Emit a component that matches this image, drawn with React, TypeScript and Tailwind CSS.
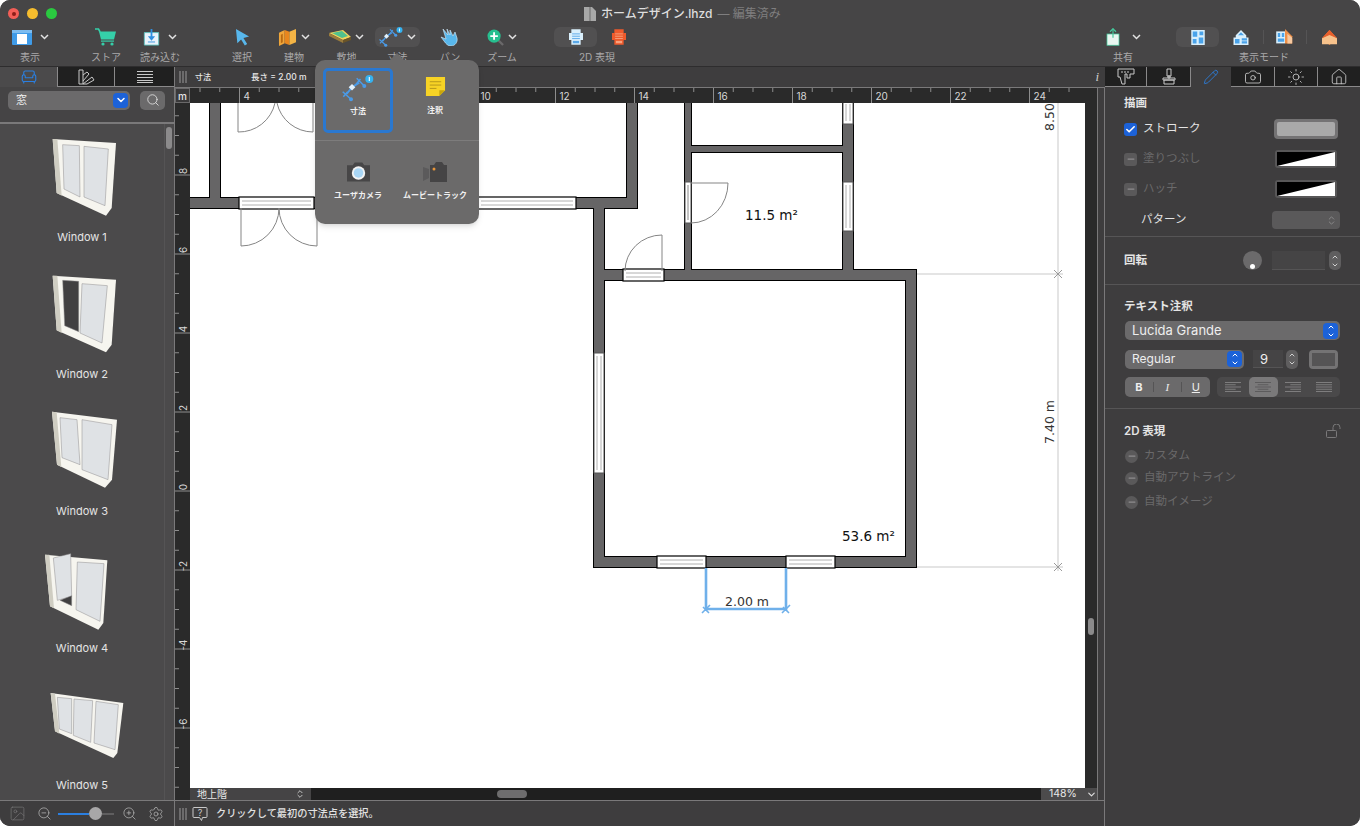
import { Armchair, Camera, Check, ChevronDown, ChevronUp, ChevronsUpDown, House, Image, Minus, Pencil, Search, Settings, Sun, ZoomIn, ZoomOut } from "lucide-react";
import type { ReactNode } from "react";

const Chev = () => (
    <svg width="9" height="6" viewBox="0 0 9 6" className="shrink-0">
        <path d="M1 1l3.5 3.5L8 1" fill="none" stroke="#e2e2e2" strokeWidth="1.5" />
    </svg>
);

const Grip = () => (
    <svg width="8" height="12" viewBox="0 0 8 12" className="shrink-0">
        <path d="M1 0v12M4 0v12M7 0v12" stroke="#9a9a9a" strokeWidth="1" />
    </svg>
);

const SidebarIcon = () => (
    <svg width="20" height="15" viewBox="0 0 20 15">
        <rect width="20" height="15" rx="1" fill="#3f9be8" />
        <rect x="5" y="4" width="10" height="10" fill="#fff" />
        <rect x="0" y="0" width="20" height="3" fill="#7cbcf0" />
    </svg>
);

const CartIcon = () => (
    <svg width="22" height="18" viewBox="0 0 22 18">
        <path d="M0 1h3.5l1.6 3" fill="none" stroke="#35cfa9" strokeWidth="1.6" />
        <path d="M4 3.5h17l-2 8H6z" fill="#35cfa9" />
        <rect x="6" y="12.5" width="13" height="1.2" fill="#35cfa9" />
        <circle cx="8" cy="16" r="1.6" fill="#35cfa9" />
        <circle cx="17" cy="16" r="1.6" fill="#35cfa9" />
    </svg>
);

const ImportIcon = () => (
    <svg width="17" height="17" viewBox="0 0 18 19">
        <path d="M1 4h16v14H1z" fill="#eaf3fb" stroke="#5fc3c0" strokeWidth="1" />
        <path d="M9 0v10" stroke="#2f8fe0" strokeWidth="2" />
        <path d="M5 8h8l-4 5z" fill="#2f8fe0" />
        <path d="M5 14.5h8" stroke="#2f8fe0" strokeWidth="1" />
    </svg>
);

const CursorIcon = () => (
    <svg width="15" height="17" viewBox="0 0 16 18">
        <path d="M1 0l14 8-6 1.5L13 16l-2.5 1.5L6.5 11 2.5 15z" fill="#58b7ec" />
    </svg>
);

const BuildIcon = () => (
    <svg width="19" height="18" viewBox="0 0 20 19">
        <path d="M1 5l6-3v14l-6 3z" fill="#f0a63a" />
        <path d="M7 2l5 2v14l-5-2z" fill="#e8861d" />
        <path d="M12 4l7-3v14l-7 3z" fill="#f4b445" />
        <path d="M3 7l2-1v9l-2 1z" fill="#b96a12" />
    </svg>
);

const LandIcon = () => (
    <svg width="22" height="14" viewBox="0 0 22 14">
        <path d="M0 3l14-3 8 7-8 3z" fill="#f1d35b" />
        <path d="M3 3l10-2 6 5-6 2z" fill="#4fc18e" />
        <path d="M0 3l14 7v3L0 6z" fill="#9a7b3c" />
        <path d="M14 10l8-3v3l-8 3z" fill="#6a5428" />
    </svg>
);

const DimIcon = ({ width = 32 }: { width?: number }) => (
    <svg width={width} height={(width * 27) / 32} viewBox="0 0 32 27" className="shrink-0">
        <path d="M.7 16.7L9 24.3M1.3 21.7l4.4-5M14.7 3.3L22.3 11M12.5 11l6-7" fill="none" stroke="#4a9be8" strokeWidth="1.5" />
        <path d="M4.7 19L10 12.3l7.3-4.6" fill="none" stroke="#4a9be8" strokeWidth="1.8" />
        <circle cx="9" cy="24.3" r="2" fill="#4a9be8" />
        <circle cx="22.3" cy="11" r="2" fill="#4a9be8" />
        <path d="M10 9l3.3 3.3-3.3 3.3-3.3-3.3z" fill="#e2f1fc" />
        <circle cx="27.3" cy="4" r="4" fill="#35b2f0" />
        <path d="M27.3 2v4" stroke="#fff" strokeWidth="1.1" />
    </svg>
);

const HandIcon = () => (
    <svg width="20" height="18" viewBox="0 0 20 18">
        <path d="M3 1l5 6-1-6 3 6 0-5 3 6 2-4 2 6c1 4-2 8-6 8-3 0-5-2-7-5L1 9l5 2z" fill="#58b7ec" stroke="#d8effb" strokeWidth=".6" />
    </svg>
);

const ZoomGreen = () => (
    <svg width="17" height="17" viewBox="0 0 18 18">
        <path d="M11 11l6 6" stroke="#6a696a" strokeWidth="2.4" />
        <circle cx="7.5" cy="7.5" r="7" fill="#27bf8f" />
        <path d="M7.5 3.5v8M3.5 7.5h8" stroke="#fff" strokeWidth="2" />
    </svg>
);

const Plan2D = ({ c, d }: { c: string; d: string }) => (
    <svg width="14" height="16" viewBox="0 0 18 20">
        <path d="M3 0h12v5h3v9h-3v6H3v-6H0V5h3z" fill={c} />
        <path d="M4 6h10M4 9h10M4 12h10" stroke={d} strokeWidth="1.2" />
        <rect x="5" y="15" width="8" height="3" fill={d} />
    </svg>
);

const ShareIcon = () => (
    <svg width="14" height="18" viewBox="0 0 18 24">
        <rect x="1" y="8" width="16" height="15" fill="#e9f7f1" stroke="#45c99c" strokeWidth="1" />
        <path d="M9 1v12" stroke="#45c99c" strokeWidth="1.6" />
        <path d="M5 5l4-4 4 4" fill="none" stroke="#45c99c" strokeWidth="1.6" />
    </svg>
);

const FloorIcon = () => (
    <svg width="14" height="15" viewBox="0 0 18 20">
        <rect width="18" height="20" fill="#d9effc" />
        <path d="M2 2h6v7H2zM11 2h5v5h-5zM2 12h5v6H2zM10 10h6v8h-6z" fill="#4aa3ea" />
    </svg>
);

const HouseIcon = () => (
    <svg width="16" height="15" viewBox="0 0 20 20">
        <path d="M10 0l7 7v3h3v10H0V10h3V7z" fill="#d9effc" />
        <path d="M10 3l4 4H6zM2 12h6v6H2zM11 11h7v3h-7zM11 15h7v3h-7z" fill="#4aa3ea" />
    </svg>
);

const MixedIcon = () => (
    <svg width="18" height="16" viewBox="0 0 22 20">
        <rect y="3" width="11" height="15" fill="#d9effc" />
        <path d="M2 5h3v5H2zM7 5h3v5H7zM2 12h8v4H2z" fill="#4aa3ea" />
        <path d="M11 0l9 9v9H11z" fill="#ee8f47" />
        <path d="M14 6l6 5v7h-6z" fill="#f7c9a0" />
    </svg>
);

const RoofIcon = () => (
    <svg width="17" height="15" viewBox="0 0 20 18">
        <path d="M10 0l9 10-9 8-9-8z" fill="#ee7f3a" />
        <path d="M1 10l9-5 9 5v7H1z" fill="#f7c28c" />
        <path d="M10 0l9 10-9-4-9 4z" fill="#e85f2c" />
    </svg>
);

const NoteIcon = () => (
    <svg width="21" height="21" viewBox="0 0 22 22">
        <path d="M1 1h20v14l-6 6H1z" fill="#f7d325" />
        <path d="M15 21v-6h6z" fill="#c9a50c" />
        <path d="M5 6h12M5 9.5h12M5 13h7" stroke="#b5961a" strokeWidth="1" />
    </svg>
);

const CamIcon = () => (
    <svg width="23" height="20" viewBox="0 0 24 20">
        <path d="M8 0h8l2 3h6v17H0V3h6z" fill="#474647" />
        <circle cx="12" cy="11" r="7" fill="#f2f2f2" />
        <circle cx="12" cy="11" r="5" fill="#a9d6f5" />
    </svg>
);

const MovieIcon = () => (
    <svg width="24" height="20" viewBox="0 0 24 20">
        <path d="M0 5l6 2v9l-6 3z" fill="#5b5a5b" />
        <path d="M7 3h4l2-3h6l2 3h3v17H7z" fill="#454445" />
        <circle cx="11" cy="7" r="1.5" fill="#e8963a" />
    </svg>
);

const ToolItem = ({ w, ml, label, active, children }: { w: string; ml?: string; label: string; active?: boolean; children: ReactNode }) => (
    <div className={`flex flex-col items-center ${w} ${ml ?? ""}`}>
        <div className={`flex h-5 items-center justify-center gap-1 rounded-md px-1 ${active ? "bg-[#515051]" : ""}`}>{children}</div>
        <span className="mt-[3px] text-[10px] leading-[14px] whitespace-nowrap text-[#aaa9aa]">{label}</span>
    </div>
);

const Toolbar = () => (
    <header className="h-[67px] shrink-0 border-b border-[#2e2d2e] bg-[#464546]">
        <div className="flex h-[27px] items-center pl-2">
            <span className="relative size-[11px] rounded-full bg-[#f25e57]">
                <span className="absolute top-[3.5px] left-[3.5px] size-1 rounded-full bg-[#8c1d18]" />
            </span>
            <span className="ml-2 size-[11px] rounded-full bg-[#f6bd2e]" />
            <span className="ml-2 size-[11px] rounded-full bg-[#2ac940]" />
            <svg width="12" height="14" viewBox="0 0 12 14" className="ml-[527px]">
                <path d="M0 0h8l4 4v10H0z" fill="#a8a8a8" />
                <path d="M6 0v14" stroke="#6a6a6a" strokeWidth="1" />
            </svg>
            <span className="ml-[5px] text-[12px] leading-4 font-medium whitespace-nowrap text-[#dedede]">ホームデザイン.lhzd</span>
            <span className="ml-[5px] text-[12px] leading-4 whitespace-nowrap text-[#7f7e7f]">— 編集済み</span>
        </div>
        <div className="flex">
            <div className="flex pl-[6px]">
                <ToolItem w="w-[48px]" label="表示"><SidebarIcon /><span className="ml-1"><Chev /></span></ToolItem>
                <ToolItem w="w-[48px]" ml="ml-[28px]" label="ストア"><CartIcon /></ToolItem>
                <ToolItem w="w-[60px]" label="読み込む"><ImportIcon /><span className="ml-1"><Chev /></span></ToolItem>
                <ToolItem w="w-[50px]" ml="ml-[27px]" label="選択"><CursorIcon /></ToolItem>
                <ToolItem w="w-[54px]" label="建物"><BuildIcon /><Chev /></ToolItem>
                <ToolItem w="w-[51px]" label="敷地"><LandIcon /><Chev /></ToolItem>
                <ToolItem w="w-[51px]" label="寸法" active><DimIcon width={24} /><Chev /></ToolItem>
                <ToolItem w="w-[54px]" label="パン"><HandIcon /></ToolItem>
                <ToolItem w="w-[50px]" label="ズーム"><ZoomGreen /><Chev /></ToolItem>
                <div className="ml-[27px] flex w-[86px] flex-col items-center">
                    <div className="flex h-5">
                        <span className="flex w-[43px] items-center justify-center rounded-md bg-[#515051]"><Plan2D c="#d9effc" d="#5aa9ea" /></span>
                        <span className="flex w-[43px] items-center justify-center"><Plan2D c="#ee5a2c" d="#f7a27e" /></span>
                    </div>
                    <span className="mt-[3px] text-[10px] leading-[14px] text-[#aaa9aa]">2D 表現</span>
                </div>
            </div>
            <div className="ml-auto flex pr-2">
                <ToolItem w="w-[50px]" label="共有"><ShareIcon /><span className="ml-2"><Chev /></span></ToolItem>
                <div className="ml-[28px] flex w-[176px] flex-col items-center">
                    <div className="flex h-5 w-full">
                        <span className="flex w-[43px] items-center justify-center rounded-md bg-[#515051]"><FloorIcon /></span>
                        <span className="flex w-[44px] items-center justify-center"><HouseIcon /></span>
                        <span className="my-[3px] flex w-[44px] items-center justify-center border-x border-[#555455]"><MixedIcon /></span>
                        <span className="flex w-[44px] items-center justify-center"><RoofIcon /></span>
                    </div>
                    <span className="mt-[3px] text-[10px] leading-[14px] text-[#aaa9aa]">表示モード</span>
                </div>
            </div>
        </div>
    </header>
);

const WindowArt = ({ index }: { index: number }) => {
    const frame = "#f6f5ef";
    const side = "#cfcdc2";
    const glass = "#dfe2e5";
    const shapes = [
        { dy: 0, outer: "158,148 348,160 335,355 318,378 170,310", side: "158,148 172,148 185,318 170,310", panes: ["188,165 238,168 240,322 192,298", "252,170 325,178 315,348 252,322"], dark: [] as string[] },
        { dy: -411, outer: "158,558 348,570 335,765 318,788 170,722", side: "158,558 172,558 185,730 170,722", panes: ["246,582 322,588 306,760 240,730"], dark: ["188,572 236,575 236,726 194,708"] },
        { dy: 0, outer: "156,144 351,168 336,348 315,372 171,303", side: "156,144 170,146 184,310 171,303", panes: ["180,162 231,168 240,303 186,282", "246,168 336,183 324,348 246,318"], dark: [] },
        { dy: 87, outer: "135,75 322,92 310,280 295,300 150,230", side: "135,75 148,75 162,236 150,230", panes: ["160,85 212,72 215,200 172,212", "232,97 312,102 300,275 228,240"], dark: ["180,212 215,198 215,228"] },
        { dy: -324, outer: "152,490 370,520 352,670 340,685 165,605", side: "152,490 165,492 178,612 165,605", panes: ["172,503 215,507 215,612 178,598", "222,508 278,513 272,638 220,617", "288,515 355,525 345,660 282,640"], dark: [] },
    ][index];
    return (
        <svg width="165" height="87" viewBox="0 130 495 261" className="shrink-0">
            <g transform={`translate(0 ${shapes.dy})`}>
                <polygon points={shapes.outer} fill={frame} />
                <polygon points={shapes.side} fill={side} />
                {shapes.panes.map((p) => <polygon key={p} points={p} fill={glass} stroke="#8f8d8f" strokeWidth="1.5" />)}
                {shapes.dark.map((p) => <polygon key={p} points={p} fill="#414041" stroke="#8f8d8f" strokeWidth="1.5" />)}
            </g>
        </svg>
    );
};

const LeftPanel = () => (
    <aside className="flex w-[175px] shrink-0 flex-col border-r border-[#7a797a] bg-[#4b4a4b]">
        <div className="flex h-5 shrink-0">
            <span className="flex w-[57px] items-center justify-center"><Armchair size={18} strokeWidth={1.5} className="text-[#2b7fe0]" /></span>
            <span className="flex w-[58px] items-center justify-center border-x border-b border-[#8a898a] bg-[#202020]">
                <svg width="17" height="16" viewBox="0 0 17 16" fill="none" stroke="#c8c8c8" strokeWidth="1">
                    <path d="M1 15V1h4v14zM5 6l4-3 2 2-6 7M5 15l9-7 2 3-7 4z" />
                </svg>
            </span>
            <span className="flex flex-1 items-center justify-center border-b border-[#8a898a] bg-[#202020]">
                <svg width="16" height="12" viewBox="0 0 16 12"><path d="M0 .5h16M0 3.5h16M0 6.5h16M0 9.5h16M0 11.5h16" stroke="#c8c8c8" strokeWidth="1" /></svg>
            </span>
        </div>
        <div className="flex h-[37px] shrink-0 items-center gap-[10px] border-b-2 border-[#7a797a] bg-[#454445] pb-[9px] pl-2">
            <div className="flex h-[19px] w-[122px] items-center rounded-[5px] bg-[#6b6a6b] pr-[2px] pl-2">
                <span className="text-[11px] text-[#eee]">窓</span>
                <span className="ml-auto flex h-[15px] w-[15px] items-center justify-center rounded-[4px] bg-[#1c62d8]"><ChevronDown size={12} strokeWidth={3} className="text-white" /></span>
            </div>
            <span className="flex h-[19px] w-[25px] items-center justify-center rounded-[5px] bg-[#6b6a6b]"><Search size={14} strokeWidth={1.4} className="text-[#e6e6e6]" /></span>
        </div>
        <div className="flex min-h-0 flex-1">
            <div className="flex flex-1 flex-col items-center overflow-hidden pt-[9px]">
                {["Window 1", "Window 2", "Window 3", "Window 4", "Window 5"].map((name, i) => (
                    <div key={name} className="flex h-[137px] w-[165px] shrink-0 flex-col items-center">
                        <WindowArt index={i} />
                        <span className="mt-[9px] text-[11px] leading-4 text-[#e4e4e4]">{name}</span>
                    </div>
                ))}
            </div>
            <div className="w-[10px] shrink-0 border-l border-[#555455] pt-[3px] pl-[1px]">
                <div className="h-[22px] w-[6px] rounded-full bg-[#8b8a8b]" />
            </div>
        </div>
        <div className="flex h-[26px] shrink-0 items-center border-t border-[#7a797a] bg-[#3e3d3e] pl-[9px]">
            <Image size={17} strokeWidth={1} className="text-[#777677]" />
            <ZoomOut size={15} strokeWidth={1.2} className="ml-[11px] text-[#b5b5b5]" />
            <div className="ml-[6px] flex w-[56px] items-center">
                <span className="h-[2px] w-[31px] bg-[#2b7fe0]" />
                <span className="size-[13px] shrink-0 rounded-full bg-[#a8a7a8]" />
                <span className="h-[2px] flex-1 bg-[#5f5e5f]" />
            </div>
            <ZoomIn size={15} strokeWidth={1.2} className="ml-[8px] text-[#b5b5b5]" />
            <Settings size={16} strokeWidth={1.1} className="ml-[11px] text-[#b5b5b5]" />
        </div>
    </aside>
);

const TopRuler = () => (
    <svg width="895" height="15" viewBox="190 87 895 15" className="block bg-[#2a2a2a]">
        {Array.from({ length: 46 }, (_, i) => {
            const x = 200 + i * 19.75;
            const major = i % 4 === 2;
            return <path key={i} d={`M${x} 87v${major ? 15 : 4}`} stroke="#8d8d8d" strokeWidth="1" />;
        })}
        {[4, 6, 8, 10, 12, 14, 16, 18, 20, 22, 24].map((n) => (
            <text key={n} x={243.5 + ((n - 4) / 2) * 79} y="99" fontSize="10" fill="#d8d8d8" fontFamily="Inter">{n}</text>
        ))}
    </svg>
);

const SideRuler = () => (
    <svg width="15" height="698" viewBox="175 102 15 698" className="block bg-[#2a2a2a]">
        {Array.from({ length: 36 }, (_, i) => {
            const y = 114.75 + i * 19.75;
            const major = i % 4 === 3;
            return <path key={i} d={`M175 ${y}h${major ? 15 : 4}`} stroke="#8d8d8d" strokeWidth="1" />;
        })}
        {["8", "6", "4", "2", "0", "-2", "-4", "-6"].map((n, i) => (
            <text key={n} x="187" y={170 + i * 79} fontSize="10" fill="#d8d8d8" fontFamily="Inter" textAnchor="middle" transform={`rotate(-90 187 ${170 + i * 79})`}>{n}</text>
        ))}
    </svg>
);

const walls = [
    [210, 100, 10, 107],
    [190, 197, 50, 10],
    [314, 197, 170, 10],
    [576, 197, 61, 10],
    [627, 100, 10, 107],
    [594, 197, 10, 369],
    [685, 100, 6, 172],
    [685, 145, 168, 6],
    [843, 100, 10, 179],
    [594, 269, 322, 10],
    [906, 269, 10, 297],
    [594, 556, 322, 10],
];

const hOpenings = [
    [239, 197, 75, 10],
    [478, 197, 98, 10],
    [623, 269, 41, 10],
    [657, 556, 49, 10],
    [786, 556, 49, 10],
];

const vOpenings = [
    [843, 100, 10, 23],
    [843, 181, 10, 49],
    [685, 181, 6, 41],
    [594, 352, 10, 120],
];

const FloorPlan = () => (
    <svg width="895" height="685" viewBox="190 102 895 685" className="block bg-white">
        {walls.map(([x, y, w, h]) => <rect key={`${x}-${y}-b`} x={x - 1} y={y - 1} width={w + 2} height={h + 2} fill="#000" />)}
        {walls.map(([x, y, w, h]) => <rect key={`${x}-${y}-g`} x={x} y={y} width={w} height={h} fill="#666566" />)}
        {hOpenings.map(([x, y, w, h]) => (
            <g key={`${x}-${y}`}>
                <rect x={x} y={y - 1} width={w} height={h + 2} fill="#fff" stroke="#000" strokeWidth="1.2" />
                <path d={`M${x + 3} ${y + 3}h${w - 6}M${x + 3} ${y + 7}h${w - 6}`} stroke="#b0b0b0" strokeWidth="1" />
            </g>
        ))}
        {vOpenings.map(([x, y, w, h]) => (
            <g key={`${x}-${y}`}>
                <rect x={x} y={y} width={w} height={h} fill="#fff" stroke="#555" strokeWidth="1" />
                <path d={`M${x + 3} ${y + 3}v${h - 6}M${x + w - 3} ${y + 3}v${h - 6}`} stroke="#b0b0b0" strokeWidth="1" />
            </g>
        ))}
        <g fill="none" stroke="#858585" strokeWidth="1">
            <path d="M238 102v29a37 37 0 0 0 37-29M277 102a37 37 0 0 0 36 29v-29" />
            <path d="M241 207v38a38 38 0 0 0 38-38M279 207a38 38 0 0 0 38 38v-38" />
            <path d="M691 182h37a37 40 0 0 1-37 40" />
            <path d="M662 270v-36a37 36 0 0 0-37 36" />
        </g>
        <g fill="none" stroke="#c9c9c9" strokeWidth="1">
            <path d="M917 273h146M917 566h146M1058 102v468" />
            <path d="M1054 269l8 8M1054 277l8-8M1054 562l8 8M1054 570l8-8" stroke="#9a9a9a" />
        </g>
        <g fill="none" stroke="#6fb0ea" strokeWidth="2.6">
            <path d="M706 567v43M786 567v43M706 608h80" />
            <path d="M702 612l8-8M782 612l8-8M703 606l6 6M783 606l6 6" strokeWidth="1.6" />
        </g>
        <g fontFamily="DejaVu Sans" fill="#111">
            <text x="745" y="219" fontSize="13.5">11.5 m²</text>
            <text x="842" y="540" fontSize="13.5">53.6 m²</text>
            <text x="725" y="605" fontSize="12.5" fill="#333">2.00 m</text>
            <text x="1050" y="421" fontSize="12.5" fill="#333" textAnchor="middle" transform="rotate(-90 1050 421) translate(0 4)">7.40 m</text>
            <text x="1050" y="116" fontSize="12.5" fill="#333" textAnchor="middle" transform="rotate(-90 1050 116) translate(0 4)">8.50</text>
        </g>
    </svg>
);

const Center = () => (
    <main className="flex w-[930px] shrink-0 flex-col bg-[#3e3d3e]">
        <div className="flex h-5 shrink-0 items-center pl-[4px] text-[8.5px] font-medium text-[#e8e8e8]">
            <Grip />
            <span className="ml-[8px] text-[8px]">寸法</span>
            <span className="ml-[40px]">長さ = 2.00 m</span>
            <span className="mr-[6px] ml-auto font-['Liberation_Serif',serif] text-[13px] text-[#cfcfcf] italic">i</span>
        </div>
        <div className="flex min-h-0 flex-1 border-t border-[#7a797a]">
            <div className="w-[15px] shrink-0">
                <div className="flex h-[15px] items-center justify-center border border-[#6a696a] bg-[#3a393a] text-[10px] leading-none font-medium text-[#e4e4e4]">m</div>
                <SideRuler />
            </div>
            <div className="flex w-[895px] shrink-0 flex-col">
                <TopRuler />
                <FloorPlan />
                <div className="flex h-[12px] shrink-0 bg-[#1f1f1f]">
                    <div className="flex w-[121px] items-center bg-[#454445] pr-[6px] pl-[7px]">
                        <span className="text-[10px] leading-none text-[#e8e8e8]">地上階</span>
                        <ChevronsUpDown size={10} className="ml-auto text-[#d8d8d8]" />
                    </div>
                    <div className="ml-[186px] flex items-center">
                        <span className="h-[8px] w-[30px] rounded-full bg-[#6e6d6e]" />
                    </div>
                    <div className="ml-auto flex w-[44px] items-center bg-[#4c4b4c] pl-[8px]">
                        <span className="text-[10.5px] leading-none text-[#e8e8e8]">148%</span>
                    </div>
                </div>
            </div>
            <div className="flex w-[12px] shrink-0 flex-col bg-[#2a2a2a]">
                <div className="mx-[3px] mt-[530px] h-[17px] w-[6px] rounded-full bg-[#8b8a8b]" />
                <div className="mt-auto flex h-[12px] items-center justify-center bg-[#4c4b4c]"><ChevronDown size={11} strokeWidth={2.5} className="text-[#e0e0e0]" /></div>
            </div>
            <div className="w-[8px] shrink-0 border-x border-[#7a797a]" />
        </div>
        <div className="flex h-[26px] shrink-0 items-center border-t border-r border-[#7a797a] pl-[4px]">
            <Grip />
            <svg width="16" height="16" viewBox="0 0 16 16" className="ml-[5px] shrink-0" fill="none" stroke="#c8c8c8" strokeWidth="1">
                <path d="M2 1.5h12a1 1 0 0 1 1 1v8a1 1 0 0 1-1 1h-3.5l-1 3-2-3H2a1 1 0 0 1-1-1v-8a1 1 0 0 1 1-1z" />
                <text x="8" y="9.5" fontSize="9" textAnchor="middle" fill="#c8c8c8" stroke="none" fontFamily="Inter">?</text>
            </svg>
            <span className="ml-[8px] text-[10.2px] font-medium whitespace-nowrap text-[#e2e2e2]">クリックして最初の寸法点を選択。</span>
        </div>
    </main>
);

const DisabledCheck = ({ round }: { round?: boolean }) => (
    <span className={`flex size-[13px] shrink-0 items-center justify-center bg-[#5a595a] ${round ? "rounded-full" : "rounded-[3px]"}`}>
        <Minus size={10} strokeWidth={3} className="text-[#8d8c8d]" />
    </span>
);

const Well = () => (
    <span className="h-[18px] w-[62px] shrink-0 rounded-[3px] bg-[#585758] p-[2px]">
        <svg viewBox="0 0 58 14" className="block h-[14px] w-[58px]" preserveAspectRatio="none">
            <rect width="58" height="14" fill="#fff" />
            <path d="M0 0h58L0 14z" fill="#000" />
        </svg>
    </span>
);

const Stepper = () => (
    <span className="flex h-[19px] w-[12px] shrink-0 flex-col items-center justify-center rounded-[5px] bg-[#5f5e5f]">
        <ChevronUp size={8} strokeWidth={3} className="text-[#d0d0d0]" />
        <ChevronDown size={8} strokeWidth={3} className="text-[#d0d0d0]" />
    </span>
);

const BlueStepper = () => (
    <span className="ml-auto flex h-[16px] w-[15px] flex-col items-center justify-center rounded-[4px] bg-[#1c62d8]">
        <ChevronUp size={8} strokeWidth={3} className="text-white" />
        <ChevronDown size={8} strokeWidth={3} className="text-white" />
    </span>
);

const AlignIcon = ({ rows, stroke = "#7e7d7e" }: { rows: string; stroke?: string }) => (
    <svg width="16" height="12" viewBox="0 0 18 12">
        <path d={rows} stroke={stroke} strokeWidth="1.2" />
    </svg>
);

const RightTab = ({ w, active, children }: { w: string; active?: boolean; children: ReactNode }) => (
    <span className={`flex items-center justify-center ${w} ${active ? "" : "border-r border-b border-[#8a898a] bg-[#202020]"}`}>{children}</span>
);

const RightPanel = () => (
    <aside className="flex min-w-0 flex-1 flex-col bg-[#3e3d3e] text-[11.5px] text-[#e4e4e4]">
        <div className="flex h-5 shrink-0">
            <RightTab w="w-[42px]">
                <svg width="20" height="17" viewBox="0 0 20 17" fill="none" stroke="#c8c8c8" strokeWidth="1"><path d="M2 1h16v5h-4v4h-3V6H9v10H6L4 9H2zM6 3v2M9 3v2M12 3v2" /></svg>
            </RightTab>
            <RightTab w="w-[44px]">
                <svg width="14" height="17" viewBox="0 0 14 17" fill="none" stroke="#c8c8c8" strokeWidth="1"><path d="M5 1h4v7H5zM1 10h12v2H1zM2 12h10v4H2zM6 8h2v2H6z" /></svg>
            </RightTab>
            <RightTab w="w-[40px]" active><Pencil size={16} strokeWidth={1.3} className="text-[#2b7fe0]" /></RightTab>
            <RightTab w="w-[44px]"><Camera size={18} strokeWidth={1.1} className="text-[#d0d0d0]" /></RightTab>
            <RightTab w="w-[43px]"><Sun size={18} strokeWidth={1.1} className="text-[#d0d0d0]" /></RightTab>
            <span className="flex flex-1 items-center justify-center border-b border-[#8a898a] bg-[#202020]"><House size={18} strokeWidth={1.1} className="text-[#d0d0d0]" /></span>
        </div>
        <section className="border-b border-[#565556] pt-[8px] pr-[22px] pb-[6px] pl-[19px]">
            <h3 className="leading-4 font-semibold">描画</h3>
            <div className="mt-[8px] flex h-[20px] items-center">
                <span className="flex size-[13px] items-center justify-center rounded-[3px] bg-[#1c62d8]"><Check size={11} strokeWidth={3.5} className="text-white" /></span>
                <span className="ml-[6px]">ストローク</span>
                <span className="ml-auto h-5 w-[64px] rounded-[4px] bg-[#747374] p-[3px]"><span className="block h-full rounded-[2px] bg-[#a9a9a9]" /></span>
            </div>
            <div className="mt-[10px] flex h-[20px] items-center text-[#6a696a]">
                <DisabledCheck />
                <span className="ml-[6px]">塗りつぶし</span>
                <span className="ml-auto flex pr-[1px]"><Well /></span>
            </div>
            <div className="mt-[10px] flex h-[20px] items-center text-[#6a696a]">
                <DisabledCheck />
                <span className="ml-[6px]">ハッチ</span>
                <span className="ml-auto flex pr-[1px]"><Well /></span>
            </div>
            <div className="mt-[11px] flex h-[20px] items-center pl-[17px]">
                <span>パターン</span>
                <span className="-mr-[2px] ml-auto flex h-[18px] w-[68px] items-center justify-end rounded-[4px] bg-[#5a595a] pr-[3px]"><ChevronsUpDown size={11} className="text-[#8d8c8d]" /></span>
            </div>
        </section>
        <section className="flex h-[48px] shrink-0 items-center border-b border-[#565556] pl-[19px]">
            <span className="w-[24px] font-semibold whitespace-nowrap">回転</span>
            <span className="relative ml-[95px] size-[19px] shrink-0 rounded-full bg-[#6b6a6b]">
                <span className="absolute bottom-[1px] left-[7px] size-[5px] rounded-full bg-white" />
            </span>
            <span className="ml-[10px] h-[19px] w-[53px] border-b border-[#555455] bg-[#454445]" />
            <span className="ml-[4px]"><Stepper /></span>
        </section>
        <section className="border-b border-[#565556] pt-[13px] pr-[20px] pb-[11px] pl-[19px]">
            <h3 className="leading-4 font-semibold">テキスト注釈</h3>
            <div className="mt-[7px] ml-[1px] flex h-[19px] items-center rounded-[5px] bg-[#6b6a6b] pr-[2px] pl-[7px] text-[13px] text-[#eee]">
                Lucida Grande
                <BlueStepper />
            </div>
            <div className="mt-[9px] ml-[1px] flex h-[20px] items-center">
                <div className="flex h-[19px] w-[119px] items-center rounded-[5px] bg-[#6b6a6b] pr-[2px] pl-[7px] text-[12px] text-[#eee]">
                    Regular
                    <BlueStepper />
                </div>
                <span className="ml-[9px] h-[18px] w-[30px] border-b border-[#555455] bg-[#454445] pl-[7px] text-[13px] leading-[18px] text-[#eee]">9</span>
                <span className="ml-[3px]"><Stepper /></span>
                <span className="ml-[11px] h-[19px] w-[29px] rounded-[4px] bg-[#747374] p-[3px]"><span className="block h-full bg-[#555455]" /></span>
            </div>
            <div className="mt-[8px] ml-[1px] flex h-[20px]">
                <div className="flex w-[85px] items-center rounded-[5px] bg-[#6b6a6b] text-[11px] text-[#eee]">
                    <span className="flex-1 text-center font-bold">B</span>
                    <span className="h-[10px] w-px bg-[#555455]" />
                    <span className="flex-1 text-center font-['Liberation_Serif',serif] italic">I</span>
                    <span className="h-[10px] w-px bg-[#555455]" />
                    <span className="flex-1 text-center underline">U</span>
                </div>
                <div className="ml-[7px] flex w-[124px] items-center rounded-[5px] bg-[#4a494a]">
                    <span className="flex h-full w-[32px] items-center justify-center"><AlignIcon rows="M0 1h18M0 3.5h12M0 6h18M0 8.5h12M0 11h18" /></span>
                    <span className="flex h-full w-[29px] items-center justify-center rounded-[5px] bg-[#7a797a]"><AlignIcon stroke="#5c5b5c" rows="M0 1h18M3 3.5h12M0 6h18M3 8.5h12M0 11h18" /></span>
                    <span className="flex h-full w-[31px] items-center justify-center"><AlignIcon rows="M0 1h18M6 3.5h12M0 6h18M6 8.5h12M0 11h18" /></span>
                    <span className="flex h-full flex-1 items-center justify-center"><AlignIcon rows="M0 1h18M0 3.5h18M0 6h18M0 8.5h18M0 11h18" /></span>
                </div>
            </div>
        </section>
        <section className="pt-[14px] pr-[18px] pl-[19px]">
            <div className="flex items-center justify-between">
                <h3 className="leading-4 font-semibold">2D 表現</h3>
                <svg width="16" height="14" viewBox="0 0 16 14" fill="none" stroke="#7a797a" strokeWidth="1">
                    <rect x=".5" y="6.5" width="10" height="7" rx="1" />
                    <path d="M7 6V3.5a3.5 3.5 0 0 1 7 0V5" />
                </svg>
            </div>
            <div className="mt-[6px] ml-[1px] flex h-[22px] items-center text-[#6a696a]"><DisabledCheck round /><span className="ml-[6px]">カスタム</span></div>
            <div className="ml-[1px] flex h-[22px] items-center text-[#6a696a]"><DisabledCheck round /><span className="ml-[6px]">自動アウトライン</span></div>
            <div className="mt-[2px] ml-[1px] flex h-[22px] items-center text-[#6a696a]"><DisabledCheck round /><span className="ml-[6px]">自動イメージ</span></div>
        </section>
    </aside>
);

const ToolPopup = () => (
    <div className="absolute top-[60px] left-[315px] z-10 flex h-[164px] w-[164px] flex-col rounded-[10px] bg-[#6b6a6a] text-[8px] font-semibold text-[#f0f0f0] shadow-md">
        <span className="absolute -top-[7px] left-[75px] size-0 border-x-[7px] border-b-[7px] border-x-transparent border-b-[#6b6a6a]" />
        <div className="flex h-[81px] border-b border-[#7d7c7c] pt-2 pl-2">
            <div className="flex h-[65px] w-[70px] flex-col items-center rounded-[5px] border-[3px] border-[#2a78d0] pt-[4px]">
                <DimIcon />
                <span className="mt-[3px] leading-3">寸法</span>
            </div>
            <div className="flex h-[65px] w-[84px] flex-col items-center pt-[8px]">
                <NoteIcon />
                <span className="mt-[7px] leading-3">注釈</span>
            </div>
        </div>
        <div className="flex pt-[21px]">
            <div className="flex w-[86px] flex-col items-center">
                <CamIcon />
                <span className="mt-[7px] leading-3 whitespace-nowrap">ユーザカメラ</span>
            </div>
            <div className="flex w-[68px] flex-col items-center">
                <MovieIcon />
                <span className="mt-[7px] leading-3 whitespace-nowrap">ムービートラック</span>
            </div>
        </div>
    </div>
);

export default function App() {
    return (
        <div className="relative flex h-[826px] w-[1360px] flex-col overflow-hidden rounded-[10px] bg-[#3e3d3e] [font-family:Inter,'Noto_Sans_CJK_JP',sans-serif]">
            <Toolbar />
            <div className="flex min-h-0 flex-1">
                <LeftPanel />
                <Center />
                <RightPanel />
            </div>
            <ToolPopup />
        </div>
    );
}
